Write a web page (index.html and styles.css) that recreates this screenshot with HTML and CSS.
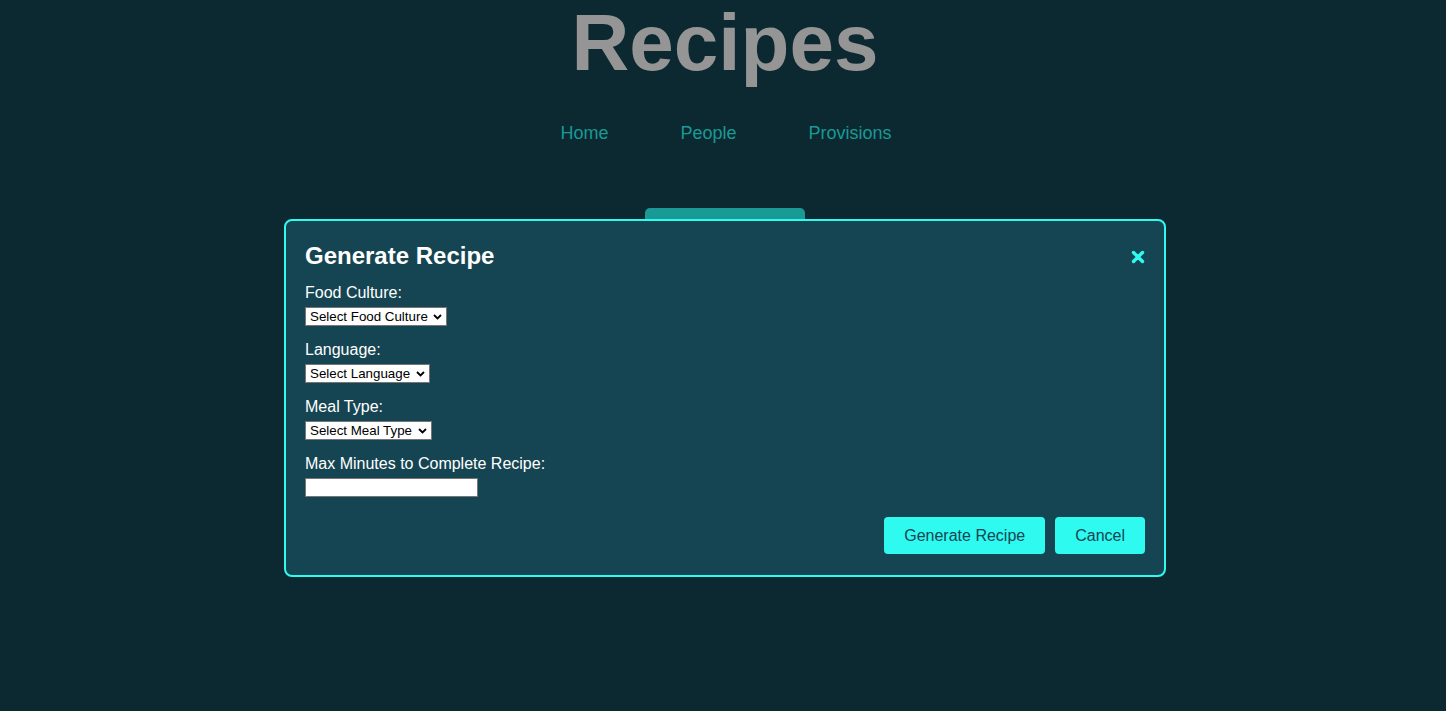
FILE: index.html
```html
<!DOCTYPE html>
<html lang="en">
<head>
<meta charset="utf-8">
<title>Recipes</title>
<link rel="stylesheet" href="styles.css">
</head>
<body>
<div class="page">
  <header class="header">
    <h1 class="site-title">Recipes</h1>
    <nav class="nav">
      <a class="nav-link" href="#">Home</a>
      <a class="nav-link" href="#">People</a>
      <a class="nav-link" href="#">Provisions</a>
    </nav>
  </header>
  <main class="main">
    <button class="open-btn" type="button">Generate Recipe</button>
  </main>

  <div class="modal">
    <div class="modal-head">
      <h2 class="modal-title">Generate Recipe</h2>
      <button class="close-btn" type="button" aria-label="Close">
        <svg width="14" height="14" viewBox="0 0 14 14"><path d="M2.5 2.5 L11.5 11.5 M11.5 2.5 L2.5 11.5" stroke="#2efaf0" stroke-width="3.4" stroke-linecap="round"/></svg>
      </button>
    </div>
    <form class="modal-form">
      <div class="field">
        <label class="field-label">Food Culture:</label>
        <span class="select-wrap">
          <select class="field-select food"><option>Select Food Culture</option></select>
          <svg class="chev" width="9" height="6" viewBox="0 0 9 6"><path d="M1 1 L4.5 4.5 L8 1" fill="none" stroke="#000" stroke-width="1.8"/></svg>
        </span>
      </div>
      <div class="field">
        <label class="field-label">Language:</label>
        <span class="select-wrap">
          <select class="field-select lang"><option>Select Language</option></select>
          <svg class="chev" width="9" height="6" viewBox="0 0 9 6"><path d="M1 1 L4.5 4.5 L8 1" fill="none" stroke="#000" stroke-width="1.8"/></svg>
        </span>
      </div>
      <div class="field">
        <label class="field-label">Meal Type:</label>
        <span class="select-wrap">
          <select class="field-select meal"><option>Select Meal Type</option></select>
          <svg class="chev" width="9" height="6" viewBox="0 0 9 6"><path d="M1 1 L4.5 4.5 L8 1" fill="none" stroke="#000" stroke-width="1.8"/></svg>
        </span>
      </div>
      <div class="field">
        <label class="field-label">Max Minutes to Complete Recipe:</label>
        <input class="field-input" type="text">
      </div>
      <div class="actions">
        <button class="action-btn" type="button">Generate Recipe</button>
        <button class="action-btn" type="button">Cancel</button>
      </div>
    </form>
  </div>
</div>
</body>
</html>
```
FILE: styles.css
```css
html, body {
  margin: 0;
  padding: 0;
  background: #0c2831;
}
body {
  font-family: "Liberation Sans", Arial, sans-serif;
  min-height: 711px;
}
.page {
  position: relative;
  margin-left: 4px;
  min-height: 711px;
}
.header {
  display: flex;
  flex-direction: column;
  align-items: center;
}
.site-title {
  margin: 0;
  font-size: 80px;
  line-height: 80px;
  padding-top: 3px;
  color: #959595;
  font-weight: bold;
}
.nav {
  display: flex;
  gap: 72px;
  margin-top: 40px;
  margin-left: 2px;
}
.nav-link {
  color: #1a9a94;
  font-size: 18px;
  text-decoration: none;
}
.main {
  display: flex;
  justify-content: center;
  margin-top: 64px;
}
.open-btn {
  width: 160px;
  height: 40px;
  border: none;
  border-radius: 5px;
  background: #1a9a94;
}
.modal {
  position: absolute;
  top: 219px;
  left: 280px;
  width: 882px;
  box-sizing: border-box;
  background: #154552;
  border: 2px solid #2efaf0;
  border-radius: 8px;
  padding: 21px 19px 21px 19px;
  color: #ffffff;
}
.modal-head {
  display: flex;
  justify-content: space-between;
  align-items: center;
  margin-bottom: 14px;
}
.modal-title {
  margin: 0;
  font-size: 24px;
  font-weight: bold;
  color: #ffffff;
}
.close-btn {
  background: none;
  border: none;
  padding: 0;
  margin-top: 2px;
  display: flex;
  cursor: pointer;
}
.field {
  display: flex;
  flex-direction: column;
  align-items: flex-start;
  margin-bottom: 15px;
}
.field-label {
  font-size: 16px;
  line-height: 18px;
  margin-bottom: 5px;
  color: #ffffff;
}
.select-wrap {
  position: relative;
  display: inline-block;
}
.field-select {
  appearance: none;
  -webkit-appearance: none;
  font-family: "Liberation Sans", Arial, sans-serif;
  font-size: 13.33px;
  height: 19px;
  padding: 0 18px 0 4px;
  border: 1px solid #767676;
  border-radius: 0;
  background: #ffffff;
  color: #000;
  box-sizing: border-box;
}
.field-select.food { width: 142px; }
.field-select.lang { width: 125px; }
.field-select.meal { width: 127px; }
.chev {
  position: absolute;
  right: 5px;
  top: 7px;
  pointer-events: none;
}
.field-input {
  width: 173px;
  height: 19px;
  box-sizing: border-box;
  border: 1px solid #767676;
  background: #fff;
  padding: 0 2px;
}
.actions {
  display: flex;
  justify-content: flex-end;
  gap: 10px;
  margin-top: 20px;
}
.action-btn {
  font-family: "Liberation Sans", Arial, sans-serif;
  font-size: 16px;
  line-height: 19px;
  padding: 9px 20px;
  border: none;
  border-radius: 4px;
  background: #2efaf0;
  color: #154552;
  cursor: pointer;
}
```
